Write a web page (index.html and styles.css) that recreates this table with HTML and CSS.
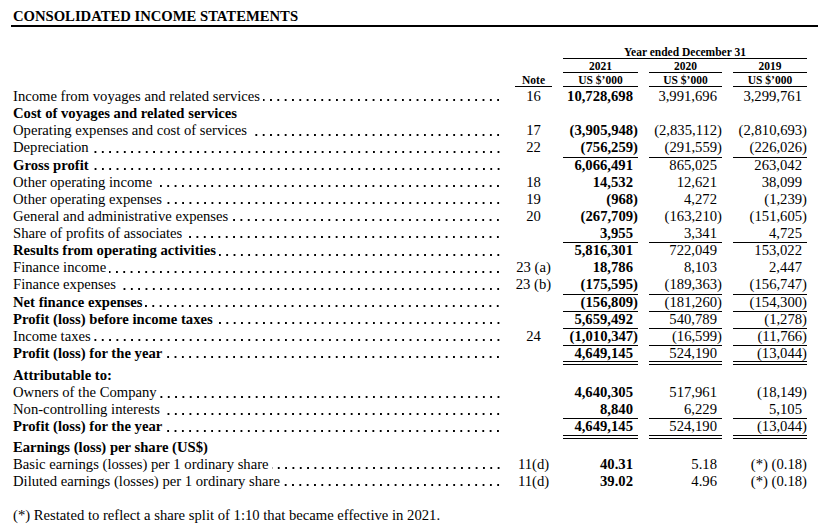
FILE: index.html
```html
<!DOCTYPE html>
<html lang="en">
<head>
  <meta charset="UTF-8">
  <meta name="viewport" content="width=device-width, initial-scale=1.0">
  <title>Consolidated Income Statements</title>
  <link rel="stylesheet" href="styles.css">
</head>
<body>
  <h1 class="title">CONSOLIDATED INCOME STATEMENTS</h1>

  <div class="statement">
    <div class="head">
      <div class="row hrow">
        <span></span><span></span>
        <span class="span3 ruled">Year ended December 31</span>
      </div>
      <div class="row hrow">
        <span></span><span></span>
        <span class="ruled">2021</span>
        <span class="ruled">2020</span>
        <span class="ruled">2019</span>
      </div>
      <div class="row hrow">
        <span></span>
        <span class="ruled">Note</span>
        <span class="ruled">US $’000</span>
        <span class="ruled">US $’000</span>
        <span class="ruled">US $’000</span>
      </div>
    </div>

    <div class="row">
      <span class="label"><span>Income from voyages and related services</span><i class="lead"></i></span>
      <span class="note">16</span>
      <span class="num cur">10,728,698</span>
      <span class="num">3,991,696</span>
      <span class="num">3,299,761</span>
    </div>
    <div class="row">
      <span class="label bold"><span>Cost of voyages and related services</span></span>
    </div>
    <div class="row">
      <span class="label"><span>Operating expenses and cost of services</span><i class="lead"></i></span>
      <span class="note">17</span>
      <span class="num cur"><span class="neg">(3,905,948)</span></span>
      <span class="num"><span class="neg">(2,835,112)</span></span>
      <span class="num"><span class="neg">(2,810,693)</span></span>
    </div>
    <div class="row">
      <span class="label"><span>Depreciation</span><i class="lead"></i></span>
      <span class="note">22</span>
      <span class="num cur ruled"><span class="neg">(756,259)</span></span>
      <span class="num ruled"><span class="neg">(291,559)</span></span>
      <span class="num ruled"><span class="neg">(226,026)</span></span>
    </div>
    <div class="row">
      <span class="label bold"><span>Gross profit</span><i class="lead"></i></span>
      <span class="note"></span>
      <span class="num cur">6,066,491</span>
      <span class="num">865,025</span>
      <span class="num">263,042</span>
    </div>
    <div class="row">
      <span class="label"><span>Other operating income</span><i class="lead"></i></span>
      <span class="note">18</span>
      <span class="num cur">14,532</span>
      <span class="num">12,621</span>
      <span class="num">38,099</span>
    </div>
    <div class="row">
      <span class="label"><span>Other operating expenses</span><i class="lead"></i></span>
      <span class="note">19</span>
      <span class="num cur"><span class="neg">(968)</span></span>
      <span class="num">4,272</span>
      <span class="num"><span class="neg">(1,239)</span></span>
    </div>
    <div class="row">
      <span class="label"><span>General and administrative expenses</span><i class="lead"></i></span>
      <span class="note">20</span>
      <span class="num cur"><span class="neg">(267,709)</span></span>
      <span class="num"><span class="neg">(163,210)</span></span>
      <span class="num"><span class="neg">(151,605)</span></span>
    </div>
    <div class="row">
      <span class="label"><span>Share of profits of associates</span><i class="lead"></i></span>
      <span class="note"></span>
      <span class="num cur ruled">3,955</span>
      <span class="num ruled">3,341</span>
      <span class="num ruled">4,725</span>
    </div>
    <div class="row">
      <span class="label bold"><span>Results from operating activities</span><i class="lead"></i></span>
      <span class="note"></span>
      <span class="num cur">5,816,301</span>
      <span class="num">722,049</span>
      <span class="num">153,022</span>
    </div>
    <div class="row">
      <span class="label"><span>Finance income</span><i class="lead"></i></span>
      <span class="note">23 (a)</span>
      <span class="num cur">18,786</span>
      <span class="num">8,103</span>
      <span class="num">2,447</span>
    </div>
    <div class="row">
      <span class="label"><span>Finance expenses</span><i class="lead"></i></span>
      <span class="note">23 (b)</span>
      <span class="num cur ruled"><span class="neg">(175,595)</span></span>
      <span class="num ruled"><span class="neg">(189,363)</span></span>
      <span class="num ruled"><span class="neg">(156,747)</span></span>
    </div>
    <div class="row">
      <span class="label bold"><span>Net finance expenses</span><i class="lead"></i></span>
      <span class="note"></span>
      <span class="num cur ruled"><span class="neg">(156,809)</span></span>
      <span class="num ruled"><span class="neg">(181,260)</span></span>
      <span class="num ruled"><span class="neg">(154,300)</span></span>
    </div>
    <div class="row">
      <span class="label bold"><span>Profit (loss) before income taxes</span><i class="lead"></i></span>
      <span class="note"></span>
      <span class="num cur ruled">5,659,492</span>
      <span class="num ruled">540,789</span>
      <span class="num ruled"><span class="neg">(1,278)</span></span>
    </div>
    <div class="row">
      <span class="label"><span>Income taxes</span><i class="lead"></i></span>
      <span class="note">24</span>
      <span class="num cur ruled"><span class="neg">(1,010,347)</span></span>
      <span class="num ruled"><span class="neg">(16,599)</span></span>
      <span class="num ruled"><span class="neg">(11,766)</span></span>
    </div>
    <div class="row total">
      <span class="label bold"><span>Profit (loss) for the year</span><i class="lead"></i></span>
      <span class="note"></span>
      <span class="num cur double">4,649,145</span>
      <span class="num double">524,190</span>
      <span class="num double"><span class="neg">(13,044)</span></span>
    </div>

    <div class="row group">
      <span class="label bold"><span>Attributable to:</span></span>
    </div>
    <div class="row">
      <span class="label"><span>Owners of the Company</span><i class="lead"></i></span>
      <span class="note"></span>
      <span class="num cur">4,640,305</span>
      <span class="num">517,961</span>
      <span class="num"><span class="neg">(18,149)</span></span>
    </div>
    <div class="row">
      <span class="label"><span>Non-controlling interests</span><i class="lead"></i></span>
      <span class="note"></span>
      <span class="num cur ruled">8,840</span>
      <span class="num ruled">6,229</span>
      <span class="num ruled">5,105</span>
    </div>
    <div class="row total">
      <span class="label bold"><span>Profit (loss) for the year</span><i class="lead"></i></span>
      <span class="note"></span>
      <span class="num cur double">4,649,145</span>
      <span class="num double">524,190</span>
      <span class="num double"><span class="neg">(13,044)</span></span>
    </div>

    <div class="row">
      <span class="label bold"><span>Earnings (loss) per share (US$)</span></span>
    </div>
    <div class="row">
      <span class="label"><span>Basic earnings (losses) per 1 ordinary share</span><i class="lead"></i></span>
      <span class="note">11(d)</span>
      <span class="num cur">40.31</span>
      <span class="num">5.18</span>
      <span class="num"><span class="neg">(*) (0.18)</span></span>
    </div>
    <div class="row">
      <span class="label"><span>Diluted earnings (losses) per 1 ordinary share</span><i class="lead"></i></span>
      <span class="note">11(d)</span>
      <span class="num cur">39.02</span>
      <span class="num">4.96</span>
      <span class="num"><span class="neg">(*) (0.18)</span></span>
    </div>
  </div>

  <p class="footnote">(*) Restated to reflect a share split of 1:10 that became effective in 2021.</p>
</body>
</html>
```

FILE: styles.css
```css
:root {
  --ink: #000000;
  --row: 17.13px;
}

body {
  margin: 0;
  padding: 8px 0 0 11px;
  background: #ffffff;
  color: var(--ink);
  font-family: "Liberation Serif", "Times New Roman", serif;
  font-size: 14.67px;
}

.title {
  margin: 0;
  padding-left: 2px;
  font-size: 14.67px;
  font-weight: bold;
  line-height: 17px;
  border-bottom: 2px solid var(--ink);
}

.statement {
  margin-top: 18px;
  padding-left: 2px;
}

.row {
  display: grid;
  grid-template-columns: 491px 37px 75px 73px 74px;
  column-gap: 11px;
  height: var(--row);
  line-height: var(--row);
  white-space: nowrap;
}

.hrow {
  height: 14px;
  line-height: 14px;
  font-size: 11.5px;
  font-weight: bold;
  text-align: center;
}

.hrow span {
  box-sizing: border-box;
  height: 14px;
}

.head {
  margin-bottom: 1px;
}

.span3 {
  grid-column: 3 / span 3;
}

.ruled {
  box-sizing: border-box;
  border-bottom: 1px solid var(--ink);
}

.double {
  box-sizing: border-box;
  border-bottom: 4px double var(--ink);
}

.label {
  display: flex;
  padding-right: 4px;
}

.bold {
  font-weight: bold;
}

.lead {
  flex: 1;
  margin-left: 3px;
  background-image: linear-gradient(90deg, transparent 4.6px, var(--ink) 4.6px, var(--ink) 6.4px, transparent 6.4px);
  background-size: 7.33px 1.8px;
  background-position: right 0 top 11.4px;
  background-repeat: repeat-x;
}

.note {
  text-align: center;
}

.num {
  text-align: right;
  padding-right: 5px;
}

.cur {
  font-weight: bold;
}

.neg {
  margin-right: -5px;
}

.total {
  height: calc(var(--row) + 3px);
}

.total .num {
  height: calc(var(--row) + 3px);
}

.group {
  margin-top: 2px;
}

.footnote {
  margin: var(--row) 0 0 2px;
  line-height: var(--row);
}
```
